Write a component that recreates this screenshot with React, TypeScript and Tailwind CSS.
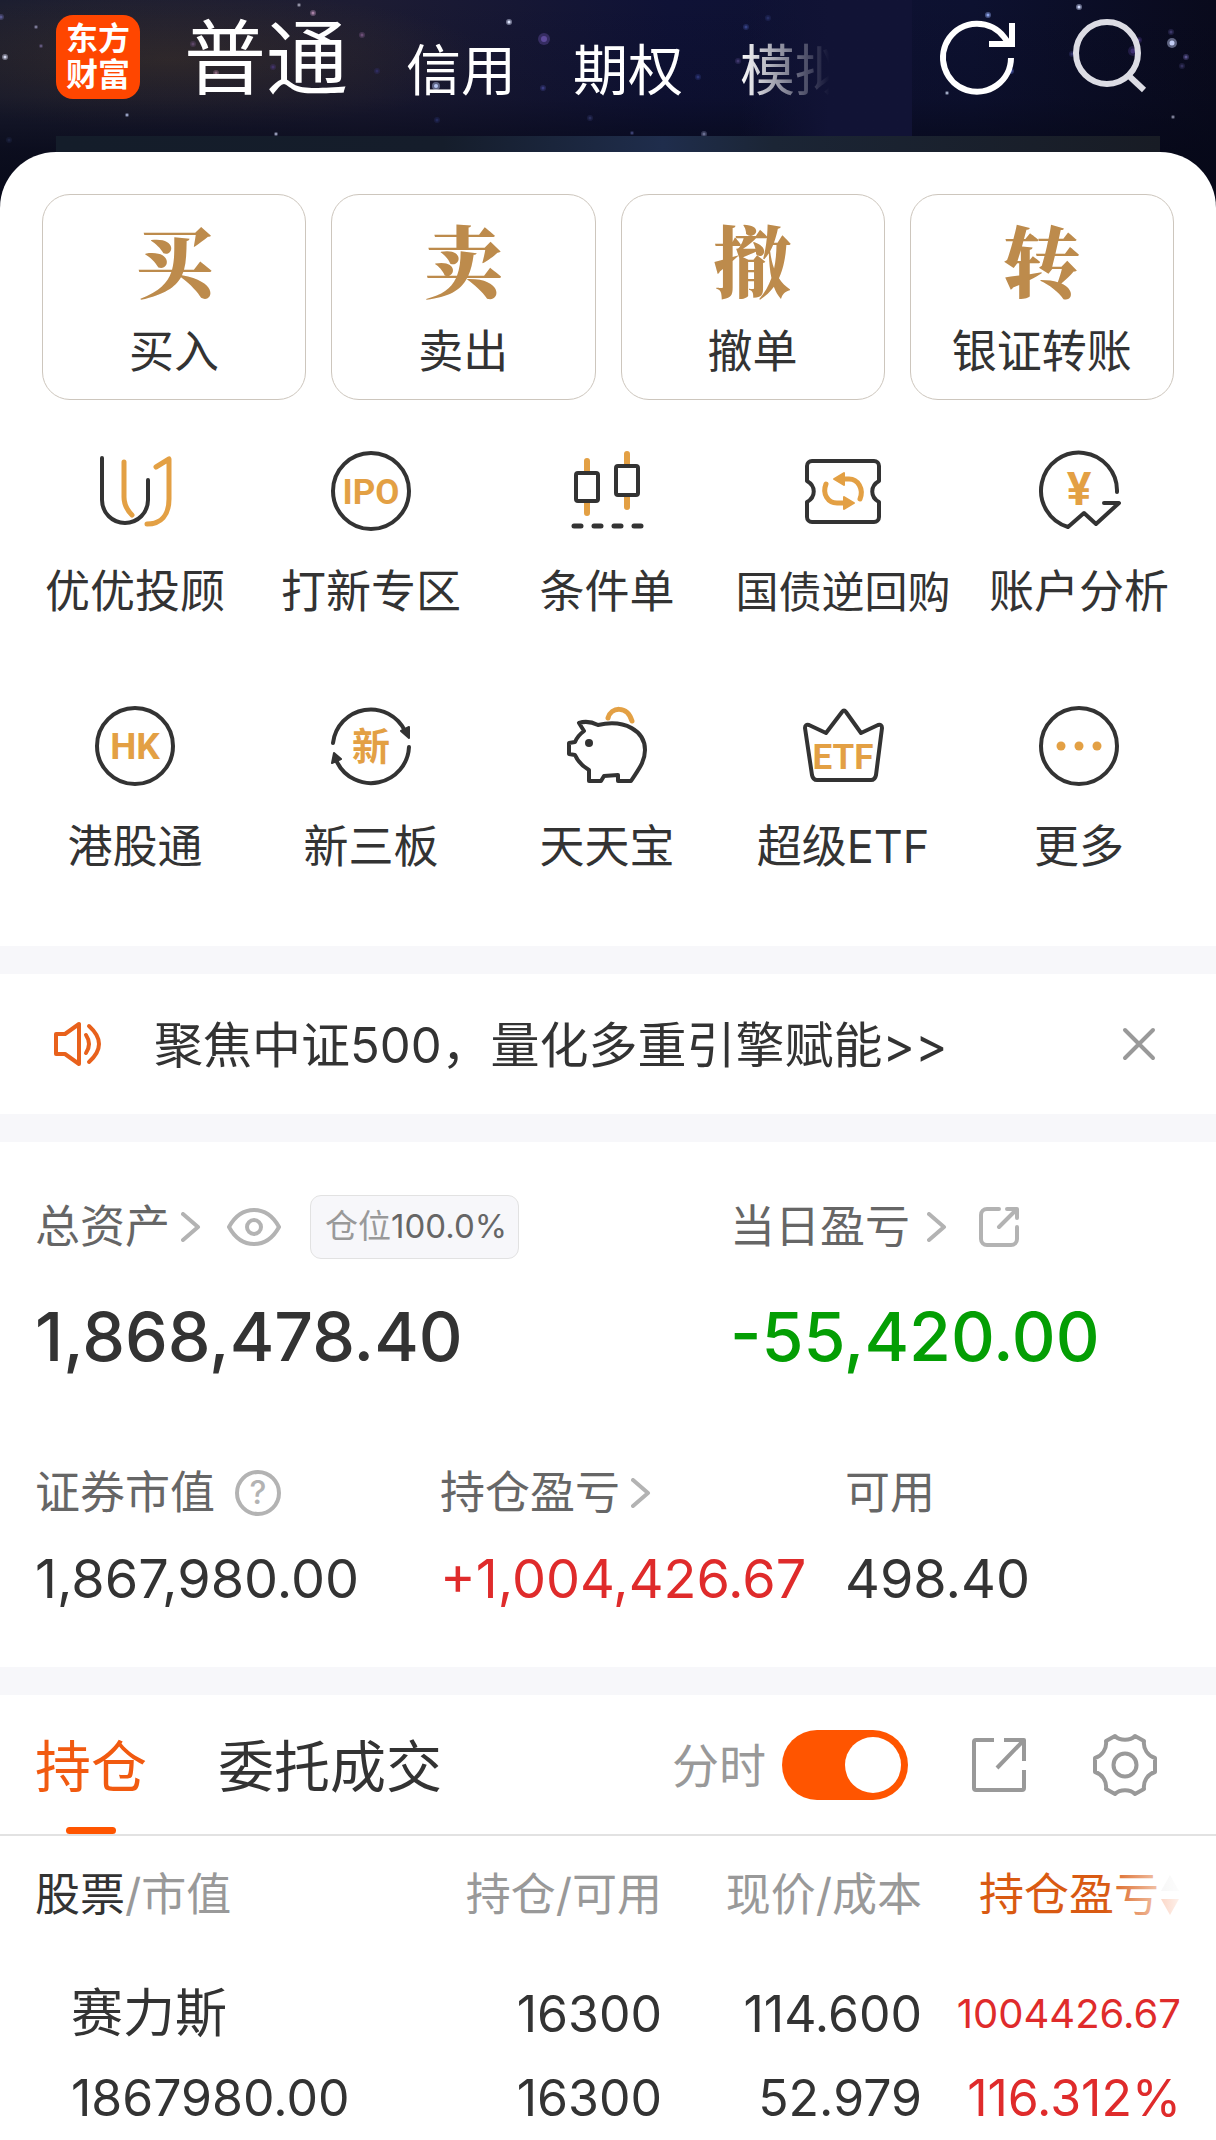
import type { ReactNode } from "react";

const DARK = "#333333";
const GOLD = "#e3a044";

const STARS: [number, number, number, string][] = [
  [36, 27, 2, "#8a88a8"], [5, 57, 3, "#d5d8f0"], [1, 17, 3, "#5a5a90"], [41, 46, 2, "#6b608a"],
  [127, 115, 2, "#a9b4d8"], [299, 5, 2, "#a6a6b8"], [313, 13, 3, "#a983a8"], [362, 35, 3, "#6d4f78"],
  [193, 44, 3, "#5e4868"], [216, 73, 3, "#8c6a80"], [273, 67, 3, "#43346a"], [377, 71, 3, "#2f2c60"],
  [436, 86, 4, "#b4c4f0"], [509, 22, 3, "#dfe6ff"], [544, 39, 6, "#5d4a9a"], [543, 88, 3, "#3a3c80"],
  [276, 134, 2, "#a9aecb"], [437, 120, 3, "#232a5a"], [590, 118, 3, "#2a2f5c"], [632, 133, 2, "#43497c"],
  [746, 27, 3, "#37458a"], [768, 18, 3, "#2f3a78"], [738, 61, 3, "#40386e"], [698, 77, 3, "#2b3474"],
  [988, 15, 3, "#8ca2e8"], [1079, 7, 3, "#d2dcff"], [947, 93, 2, "#b6c0dc"], [1011, 71, 3, "#4c5cb0"],
  [1133, 51, 5, "#3d2f70"], [1139, 40, 3, "#3d2f70"], [1172, 43, 5, "#c3cdf5"], [1186, 57, 3, "#5b5590"],
  [1182, 66, 3, "#33305c"], [1173, 117, 2, "#8e90a8"], [1171, 32, 3, "#3c3868"], [704, 134, 3, "#6a6f92"],
  [9, 140, 3, "#1d2340"], [1072, 54, 3, "#33336a"],
];

function NightSky() {
  return (
    <svg className="absolute inset-0 h-full w-full" viewBox="0 0 1216 216" preserveAspectRatio="none" aria-hidden="true">
      <defs>
        <linearGradient id="sky" x1="0" y1="0" x2="1" y2="0">
          <stop offset="0" stopColor="#1c1e30" />
          <stop offset="0.3" stopColor="#1d1c33" />
          <stop offset="0.55" stopColor="#0f1236" />
          <stop offset="0.8" stopColor="#0d1130" />
          <stop offset="1" stopColor="#090a1c" />
        </linearGradient>
        <linearGradient id="dusk" x1="0" y1="0" x2="0" y2="1">
          <stop offset="0" stopColor="#060818" stopOpacity="0" />
          <stop offset="0.45" stopColor="#060818" stopOpacity="0.2" />
          <stop offset="0.7" stopColor="#060818" stopOpacity="0.75" />
          <stop offset="1" stopColor="#060818" />
        </linearGradient>
        <radialGradient id="dust">
          <stop offset="0" stopColor="#3a302c" stopOpacity="0.8" />
          <stop offset="1" stopColor="#3a302c" stopOpacity="0" />
        </radialGradient>
        <linearGradient id="strip" x1="0" y1="0" x2="1" y2="0">
          <stop offset="0" stopColor="#141d2a" />
          <stop offset="0.35" stopColor="#151d2b" />
          <stop offset="0.55" stopColor="#1f2d4c" />
          <stop offset="0.65" stopColor="#1b2535" />
          <stop offset="1" stopColor="#181c25" />
        </linearGradient>
      </defs>
      <rect width="1216" height="216" fill="url(#sky)" />
      <ellipse cx="170" cy="60" rx="320" ry="70" fill="url(#dust)" />
      <rect width="1216" height="216" fill="url(#dusk)" />
      {STARS.map(([x, y, r, fill]) => (
        <g key={`${x}-${y}`} fill={fill}>
          <circle cx={x} cy={y} r={r} opacity="0.45" />
          <circle cx={x} cy={y} r={r / 2} />
        </g>
      ))}
      <rect x="56" y="136" width="1104" height="80" fill="url(#strip)" />
    </svg>
  );
}

function FeatureIcon({ children }: { children: ReactNode }) {
  return (
    <svg
      className="size-[84px]"
      viewBox="0 0 84 84"
      fill="none"
      stroke={DARK}
      strokeWidth="4"
      strokeLinecap="round"
      strokeLinejoin="round"
      aria-hidden="true"
    >
      {children}
    </svg>
  );
}

function IconText({ y, size, children }: { y: number; size: number; children: string }) {
  return (
    <text
      x="42"
      y={y}
      fontSize={size}
      fontWeight="700"
      fontFamily="Roboto, 'Noto Sans CJK SC', sans-serif"
      textAnchor="middle"
      fill={GOLD}
      stroke="none"
    >
      {children}
    </text>
  );
}

const FEATURES: { label: string; small?: boolean; icon: ReactNode }[] = [
  {
    label: "优优投顾",
    icon: (
      <>
        <path d="M9 9V51a23 23 0 0 0 46 0V31" />
        <path d="M31 13V48c0 9 4 14 8 18M63 18l13-8V50c0 16-8 25-22 25" stroke={GOLD} strokeWidth="5" />
      </>
    ),
  },
  {
    label: "打新专区",
    icon: (
      <>
        <circle cx="42" cy="42" r="38" />
        <IconText y={55} size={35}>IPO</IconText>
      </>
    ),
  },
  {
    label: "条件单",
    icon: (
      <>
        <path d="M22 12V22M22 54V64M62 5V15M62 48V58" stroke={GOLD} strokeWidth="6" />
        <rect x="11" y="24" width="22" height="28" rx="2" />
        <rect x="51" y="17" width="22" height="29" rx="2" />
        <path d="M9 77H76" strokeWidth="5" strokeDasharray="7 13" />
      </>
    ),
  },
  {
    label: "国债逆回购",
    small: true,
    icon: (
      <>
        <path d="M11 12H73a5 5 0 0 1 5 5V32c-9 5-9 16 0 21V68a5 5 0 0 1-5 5H11a5 5 0 0 1-5-5V53c9-5 9-16 0-21V17a5 5 0 0 1 5-5z" />
        <path d="M25 35C21 45 27 54 36 54H43M59 50C63 40 57 30 48 30H42" stroke={GOLD} strokeWidth="5" />
        <path d="M53 54 43 48V60zM33 30 43 24V36z" fill={GOLD} stroke={GOLD} strokeWidth="2" />
      </>
    ),
  },
  {
    label: "账户分析",
    icon: (
      <>
        <path d="M80 43A38 38 0 1 0 31 78L47 64l12 11L82 54H67" />
        <IconText y={56} size={46}>¥</IconText>
      </>
    ),
  },
  {
    label: "港股通",
    icon: (
      <>
        <circle cx="42" cy="42" r="38" />
        <IconText y={55} size={37}>HK</IconText>
      </>
    ),
  },
  {
    label: "新三板",
    icon: (
      <>
        <path d="M4 39A38 38 0 0 1 76 27M80 43A38 38 0 0 1 8 58" />
        <path d="M72 27 80 23V34zM3 59 5 49 12 55z" fill={DARK} strokeWidth="2" />
        <IconText y={56} size={38}>新</IconText>
      </>
    ),
  },
  {
    label: "天天宝",
    icon: (
      <>
        <path d="M43 14C46 3 62 1 67 17" stroke={GOLD} strokeWidth="5" />
        <path d="M14 19c6-2 13-1 19 2C60 15 80 27 80 46c0 12-7 20-14 31H53V71l-14 1-3 5H24V66C17 62 13 58 10 51L4 50V39l6-1c2-5 5-8 9-11z" />
        <circle cx="24" cy="39" r="4" fill={DARK} stroke="none" />
      </>
    ),
  },
  {
    label: "超级ETF",
    icon: (
      <>
        <path d="M41 8q2-3 4 0L60 29 77 21q4-1 4 3L75 71q-1 5-5 5H16q-4 0-5-5L4 24q0-4 4-3L25 29z" />
        <IconText y={65} size={35}>ETF</IconText>
      </>
    ),
  },
  {
    label: "更多",
    icon: (
      <>
        <circle cx="42" cy="42" r="38" />
        <g fill={GOLD} stroke="none">
          <circle cx="24" cy="42" r="4.5" />
          <circle cx="42" cy="42" r="4.5" />
          <circle cx="60" cy="42" r="4.5" />
        </g>
      </>
    ),
  },
];

const ACTIONS = [
  { glyph: "买", label: "买入" },
  { glyph: "卖", label: "卖出" },
  { glyph: "撤", label: "撤单" },
  { glyph: "转", label: "银证转账" },
];

function Chevron() {
  return (
    <svg className="h-[30px] w-[20px] shrink-0" viewBox="0 0 20 30" fill="none" stroke="#b3b3b3" strokeWidth="4" strokeLinecap="round" strokeLinejoin="round" aria-hidden="true">
      <path d="M2 2 17 15 2 28" />
    </svg>
  );
}

function Header() {
  return (
    <header className="relative -mb-[64px] h-[216px]">
      <NightSky />
      <div className="relative flex h-[136px] items-stretch">
        <div className="mt-[15px] ml-[56px] flex size-[84px] shrink-0 flex-col items-center justify-center rounded-[17px] bg-[#ff4600] text-[32px] leading-[36px] font-bold text-white">
          <span>东方</span>
          <span>财富</span>
        </div>
        <nav className="relative ml-[44px] flex min-w-0 flex-1 items-start overflow-hidden whitespace-nowrap text-white">
          <button type="button" className="text-[82px] leading-[118px]">普通</button>
          <button type="button" className="ml-[58px] pt-[30px] text-[55px] leading-[80px]">信用</button>
          <button type="button" className="ml-[57px] pt-[30px] text-[55px] leading-[80px]">期权</button>
          <button type="button" className="ml-[57px] pt-[30px] text-[55px] leading-[80px]">模拟</button>
          <span className="pointer-events-none absolute inset-y-0 right-0 w-[172px] bg-linear-to-r from-[#111335]/0 via-[#111335] via-52% to-[#111335]" />
        </nav>
        <button type="button" aria-label="刷新" className="ml-[26px] self-start pt-[15px]">
          <svg className="size-[84px]" viewBox="0 0 84 84" fill="none" stroke="#fff" strokeWidth="6" aria-hidden="true">
            <path d="M73 43A34 34 0 1 1 66 22L72 30M74 8V29H51" />
          </svg>
        </button>
        <button type="button" aria-label="搜索" className="mr-[64px] ml-[46px] self-start pt-[14px]">
          <svg className="size-[84px]" viewBox="0 0 84 84" fill="none" stroke="#dcdce4" strokeWidth="6" aria-hidden="true">
            <circle cx="39" cy="39" r="31" />
            <path d="M60 61 76 76" />
          </svg>
        </button>
      </div>
    </header>
  );
}

function Metric({ label, value, extra, valueClass }: { label: string; value: string; extra?: ReactNode; valueClass: string }) {
  return (
    <div>
      <div className="flex h-[60px] items-center text-[45px] text-[#666]">
        {label}
        {extra}
      </div>
      <div className={`mt-[20px] text-[54px] leading-[72px] whitespace-nowrap ${valueClass}`}>{value}</div>
    </div>
  );
}

const Gap = () => <div className="h-[28px] bg-[#f7f7fa]" />;

export default function App() {
  return (
    <div className="w-full overflow-hidden bg-white font-[Inter,'Noto_Sans_CJK_SC',sans-serif] text-[#333]">
      <Header />

      <section className="relative rounded-t-[56px] bg-white pt-[42px] pb-[69px]">
        <div className="grid grid-cols-4 gap-[25px] px-[42px]">
          {ACTIONS.map((a) => (
            <button key={a.label} type="button" className="flex h-[206px] flex-col items-center rounded-[28px] border border-[#cdc6bd] pt-[17px]">
              <span className="font-['Noto_Serif_CJK_SC','Noto_Serif_SC','Noto_Sans_CJK_SC',serif] text-[78px] leading-[92px] font-black text-[#bd8b4c]">{a.glyph}</span>
              <span className="mt-[18px] text-[45px] leading-[60px]">{a.label}</span>
            </button>
          ))}
        </div>
        <div className="mt-[49px] grid grid-cols-5 gap-y-[82px] pr-[19px] pl-[17px]">
          {FEATURES.map((f) => (
            <button key={f.label} type="button" className="flex flex-col items-center whitespace-nowrap">
              <FeatureIcon>{f.icon}</FeatureIcon>
              <span className={f.small ? "mt-[29px] text-[43px] leading-[60px]" : "mt-[29px] text-[45px] leading-[60px]"}>{f.label}</span>
            </button>
          ))}
        </div>
      </section>

      <Gap />
      <section className="flex h-[140px] items-center pr-[60px] pl-[52px]">
        <svg className="size-[52px] shrink-0" viewBox="0 0 52 52" fill="none" stroke="#e8611c" strokeWidth="4" strokeLinecap="round" strokeLinejoin="round" aria-hidden="true">
          <path d="M4 16H13L27 6V46L13 36H4zM34 17q6 9 0 18M37 8q20 18 0 36" />
        </svg>
        <a href="#focus" className="ml-[50px] flex-1 pt-[4px] text-[49px] leading-[64px] whitespace-nowrap">聚焦中证500，量化多重引擎赋能&gt;&gt;</a>
        <button type="button" aria-label="关闭">
          <svg className="size-[34px]" viewBox="0 0 34 34" fill="none" stroke="#999" strokeWidth="4" strokeLinecap="round" aria-hidden="true">
            <path d="M3 3 31 31M31 3 3 31" />
          </svg>
        </button>
      </section>
      <Gap />

      <section className="px-[35px] pt-[53px] pb-[52px]">
        <div className="flex">
          <div className="w-[695px]">
            <div className="flex h-[64px] items-center text-[45px] text-[#666]">
              总资产
              <span className="ml-[11px] flex"><Chevron /></span>
              <button type="button" aria-label="隐藏金额" className="ml-[26px]">
                <svg className="h-[38px] w-[54px]" viewBox="0 0 54 38" fill="none" stroke="#b3b3b3" strokeWidth="4" aria-hidden="true">
                  <path d="M2 19C8 8 17 2 27 2s19 6 25 17C46 30 37 36 27 36S8 30 2 19z" />
                  <circle cx="27" cy="19" r="7" />
                </svg>
              </button>
              <span className="ml-[29px] flex h-[64px] items-center rounded-[11px] border border-[#e2e2e2] bg-[#f7f7fa] pr-[11px] pl-[14px] text-[33px]">
                <span className="text-[#999]">仓位</span>100.0%
              </span>
            </div>
            <div className="mt-[35px] text-[68px] leading-[84px] font-medium">1,868,478.40</div>
          </div>
          <div>
            <div className="flex h-[64px] items-center text-[45px] text-[#666]">
              当日盈亏
              <span className="ml-[17px] flex"><Chevron /></span>
              <button type="button" aria-label="分享盈亏" className="ml-[32px]">
                <svg className="size-[40px]" viewBox="0 0 40 40" fill="none" stroke="#b3b3b3" strokeWidth="4" strokeLinecap="round" strokeLinejoin="round" aria-hidden="true">
                  <path d="M20 2H8a6 6 0 0 0-6 6V32a6 6 0 0 0 6 6H32a6 6 0 0 0 6-6V20M28 2H38V11M20 20 37 3" />
                </svg>
              </button>
            </div>
            <div className="mt-[35px] text-[68px] leading-[84px] font-medium text-[#049e04]">-55,420.00</div>
          </div>
        </div>
        <div className="mt-[85px] grid grid-cols-[405px_405px_1fr]">
          <Metric
            label="证券市值"
            value="1,867,980.00"
            valueClass="text-[#333]"
            extra={
              <button type="button" aria-label="证券市值说明" className="ml-[20px] flex size-[46px] items-center justify-center rounded-full border-[4px] border-[#b3b3b3] text-[32px] leading-none font-medium text-[#b3b3b3]">
                ?
              </button>
            }
          />
          <Metric label="持仓盈亏" value="+1,004,426.67" valueClass="text-[#df2b2b]" extra={<span className="ml-[11px] flex"><Chevron /></span>} />
          <Metric label="可用" value="498.40" valueClass="text-[#333]" />
        </div>
      </section>
      <Gap />

      <section>
        <div className="flex h-[141px] items-stretch border-b-2 border-[#e2e2e2] pr-[59px] pl-[35px]">
          <button type="button" className="relative pt-[4px] text-[56px] text-[#f15a10]">
            持仓
            <span className="absolute bottom-0 left-1/2 h-[7px] w-[50px] -translate-x-1/2 rounded-full bg-[#ff5500]" />
          </button>
          <button type="button" className="ml-[71px] pt-[4px] text-[56px]">委托成交</button>
          <div className="ml-auto flex items-center">
            <label htmlFor="intraday" className="pt-[4px] text-[47px] text-[#999]">分时</label>
            <input
              id="intraday"
              type="checkbox"
              role="switch"
              defaultChecked
              className="ml-[16px] flex h-[70px] w-[126px] appearance-none items-center rounded-full bg-[#ccc] px-[7px] before:size-[56px] before:rounded-full before:bg-white checked:justify-end checked:bg-[#ff5500]"
            />
            <button type="button" aria-label="分享持仓" className="ml-[63px]">
              <svg className="size-[56px]" viewBox="0 0 56 56" fill="none" stroke="#999" strokeWidth="4" strokeLinejoin="round" aria-hidden="true">
                <path d="M23 3H5a2 2 0 0 0-2 2V51a2 2 0 0 0 2 2H51a2 2 0 0 0 2-2V33M33 3H53V24M26 31 52 4" />
              </svg>
            </button>
            <button type="button" aria-label="设置" className="ml-[66px]">
              <svg className="size-[64px]" viewBox="0 0 64 64" fill="none" stroke="#999" strokeWidth="4" strokeLinejoin="round" aria-hidden="true">
                <path d="M22 3C27 8 37 8 42 3L51 8C50 16 55 23 62 25V39C55 41 50 48 51 56L42 61C37 56 27 56 22 61L13 56C14 48 9 41 2 39V25C9 23 14 16 13 8Z" />
                <circle cx="32" cy="32" r="11.5" />
              </svg>
            </button>
          </div>
        </div>

        <div className="px-[35px]">
          <table className="w-full table-fixed text-right whitespace-nowrap">
            <thead>
              <tr className="h-[118px] text-[45px] text-[#999]">
                <th className="text-left font-normal"><span className="text-[#333]">股票</span>/市值</th>
                <th className="w-[240px] font-normal">持仓/可用</th>
                <th className="w-[260px] font-normal">现价/成本</th>
                <th className="w-[259px] font-normal text-[#d95a12]">
                  <button type="button" className="relative inline-flex items-center">
                    持仓盈亏
                    <svg className="h-[42px] w-[22px]" viewBox="0 0 22 42" aria-hidden="true">
                      <path d="M11 1 20 17H2z" fill="#e8e8e8" />
                      <path d="M11 41 20 25H2z" fill="#f58a5c" />
                    </svg>
                    <span className="pointer-events-none absolute inset-y-0 right-0 w-[76px] bg-linear-to-r from-white/0 to-white/90" />
                  </button>
                </th>
              </tr>
            </thead>
            <tbody>
              <tr className="text-[50px] leading-[84px]">
                <td className="pt-[18px] pl-[36px] text-left"><div className="text-[52px] leading-[84px]">赛力斯</div><div>1867980.00</div></td>
                <td className="pt-[18px]"><div>16300</div><div>16300</div></td>
                <td className="pt-[18px]"><div>114.600</div><div>52.979</div></td>
                <td className="pt-[18px] text-[#df2b2b]"><div className="text-[40px] leading-[84px]">1004426.67</div><div>116.312%</div></td>
              </tr>
            </tbody>
          </table>
        </div>
      </section>
    </div>
  );
}
